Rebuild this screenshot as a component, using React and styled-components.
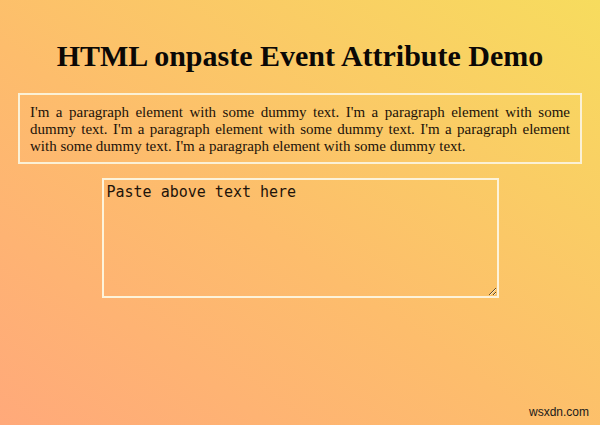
import React from 'react';
import styled, { createGlobalStyle } from 'styled-components';

const GlobalStyle = createGlobalStyle`
  html, body {
    margin: 0;
    padding: 0;
  }
  body {
    font-family: "Liberation Serif", "Times New Roman", serif;
  }
`;

const Page = styled.div`
  position: relative;
  width: 600px;
  height: 425px;
  overflow: hidden;
  box-sizing: border-box;
  padding: 38px 18px 0;
  display: flex;
  flex-direction: column;
  align-items: center;
  background: linear-gradient(to top right, #ffa97a 0%, #fdbd6c 45%, #f7dc5e 100%);
`;

const Title = styled.h1`
  margin: 0;
  font-size: 30px;
  line-height: 35px;
  font-weight: bold;
  color: #0b0806;
`;

const Paragraph = styled.p`
  box-sizing: border-box;
  width: 564px;
  margin: 20px 0 0;
  padding: 9px 10px 7px 10px;
  border: 2px solid #fbf1d6;
  font-size: 15px;
  line-height: 17px;
  text-align: justify;
  color: #1c1209;
`;

const PasteArea = styled.textarea`
  box-sizing: border-box;
  width: 397px;
  height: 120px;
  margin-top: 14px;
  padding: 3px 3px;
  border: 2px solid #fdf3da;
  background: transparent;
  font-family: "DejaVu Sans Mono", "Liberation Mono", monospace;
  font-size: 15px;
  line-height: 18px;
  color: #1f140a;
  outline: none;
`;

const Watermark = styled.span`
  position: absolute;
  right: 11px;
  bottom: 6px;
  font-family: "Liberation Sans", Arial, sans-serif;
  font-size: 12px;
  color: #1a1a1a;
`;

const App = () => {
  return (
    <>
      <GlobalStyle />
      <Page>
        <Title>HTML onpaste Event Attribute Demo</Title>
        <Paragraph>
          I'm a paragraph element with some dummy text. I'm a paragraph element with some
          dummy text. I'm a paragraph element with some dummy text. I'm a paragraph element
          with some dummy text. I'm a paragraph element with some dummy text.
        </Paragraph>
        <PasteArea defaultValue="Paste above text here" />
        <Watermark>wsxdn.com</Watermark>
      </Page>
    </>
  );
};

export default App;
